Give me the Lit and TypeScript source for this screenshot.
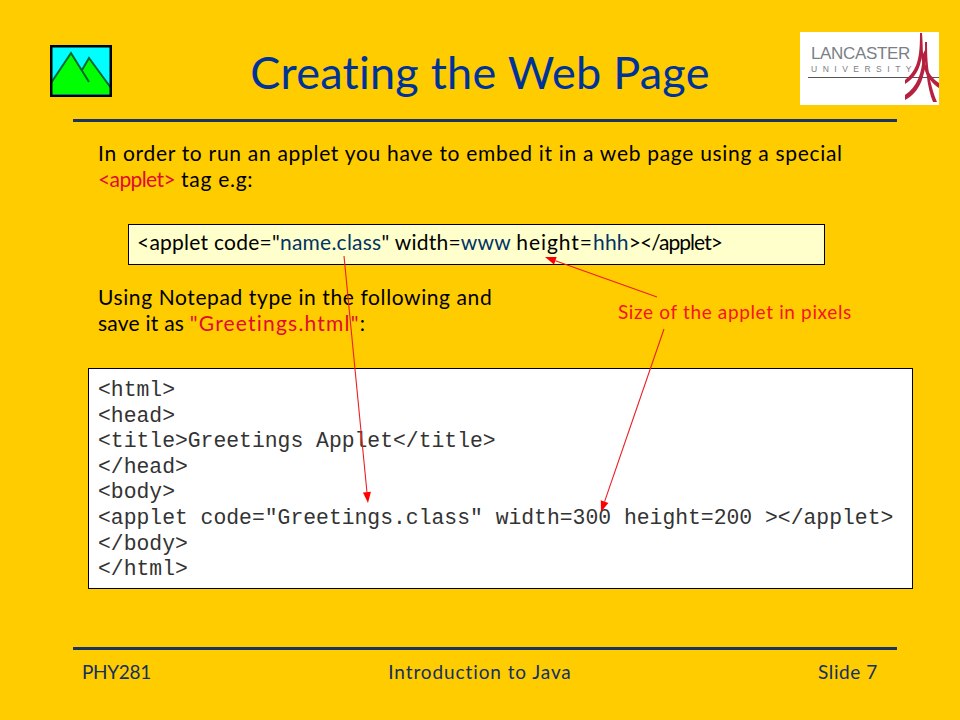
import { LitElement, html, css, svg } from "lit";
import { customElement } from "lit/decorators.js";

const arrow = (x1: number, y1: number, x2: number, y2: number) => {
  const a = Math.atan2(y2 - y1, x2 - x1);
  const len = 11, w = 4;
  const bx = x2 - len * Math.cos(a), by = y2 - len * Math.sin(a);
  const nx = -Math.sin(a) * w, ny = Math.cos(a) * w;
  return svg`<line x1=${x1} y1=${y1} x2=${bx} y2=${by} stroke="#ee1c25" stroke-width="1.1"></line>
    <polygon points="${x2},${y2} ${bx + nx},${by + ny} ${bx - nx},${by - ny}" fill="#f00"></polygon>`;
};

@customElement("app-root")
export class AppRoot extends LitElement {
  static styles = css`
    :host { display: block; width: 960px; height: 720px; }
    .slide {
      position: relative; box-sizing: border-box; width: 960px; height: 720px; overflow: hidden;
      background: #ffcc00; color: #000;
      font-family: "Lato", "Open Sans", sans-serif;
      display: flex; flex-direction: column;
    }
    .header { height: 119px; padding: 32px 21px 0 50px; box-sizing: border-box; display: flex; align-items: flex-start; }
    .mtn { width: 62px; height: 52px; margin-top: 13px; flex: none; display: block; }
    .title {
      flex: 1; text-align: center; color: #003399; font-size: 45px; line-height: 56px; margin-top: 12px;
      letter-spacing: 0.25px; padding-left: 48px; white-space: nowrap;
    }
    .logo { position: relative; width: 139px; height: 73px; background: #fff; flex: none; overflow: hidden; }
    .logo-text { padding: 13px 0 0 11px; color: #7a7f86; font-family: "Liberation Sans", sans-serif; }
    .lan { font-size: 17px; line-height: 18px; letter-spacing: -0.35px; white-space: nowrap; }
    .uni { font-size: 8.5px; line-height: 10px; letter-spacing: 5.5px; white-space: nowrap; margin-top: 1px; }
    .logo-rule { height: 1px; background: #555; margin: 3px 0 0 8px; }
    .spire { position: absolute; left: 0; top: 0; width: 139px; height: 73px; }
    .rule { height: 3px; background: #1a3360; margin: 0 63px 0 73px; flex: none; }
    .para { margin: 18px 0 0 98px; font-size: 21px; line-height: 26px; white-space: nowrap; letter-spacing: 0.7px; }
    .red { color: #e00b2f; }
    .tag { letter-spacing: -0.6px; }
    .blue { color: #003366; }
    .code {
      box-sizing: border-box; width: 697px; height: 41px; margin: 32px 0 0 128px;
      border: 1px solid #000; background: #ffffcc; padding: 0 0 0 8px;
      font-size: 21px; line-height: 33px; white-space: nowrap; letter-spacing: 0.24px;
    }
    .wide { letter-spacing: 0.95px; }
    .close { letter-spacing: -0.95px; }
    .middle { display: grid; grid-template-columns: 520px auto; margin: 19px 0 0 98px; }
    .txt { font-size: 21px; line-height: 26px; white-space: nowrap; letter-spacing: 0.6px; }
    .tight { letter-spacing: 0.24px; }
    .loose { letter-spacing: 1.2px; }
    .note { margin-top: 16px; font-size: 19px; line-height: 24px; color: #f5141e; white-space: nowrap; letter-spacing: 0.64px; }
    .box {
      box-sizing: border-box; width: 825px; height: 221px; margin: 32px 0 0 88px;
      border: 1px solid #000; background: #fff; padding: 9px 0 0 9px;
      font-family: "Liberation Mono", monospace; font-size: 21.38px; line-height: 25.6px; color: #333; white-space: pre;
    }
    .rule2 { margin-top: 58px; }
    .footer {
      margin: 10px 82px 0 82px; display: grid; grid-template-columns: 1fr auto 1fr;
      font-size: 19px; line-height: 24px; color: #14305f;
    }
    .f-l { letter-spacing: -0.3px; }
    .f-m { letter-spacing: 0.9px; }
    .f-r { text-align: right; letter-spacing: 0.6px; }
    .arrows { position: absolute; left: 0; top: 0; width: 960px; height: 720px; pointer-events: none; }
  `;

  render() {
    return html`<div class="slide">
      <div class="header">
        <svg class="mtn" viewBox="0 0 62 52">
          <rect x="1.5" y="1.5" width="59" height="49" fill="#00ffff"></rect>
          <path d="M2 38 L21 8 L32 25 L39 13 L60 43 L60 49 L2 49 Z" fill="#00ff00"></path>
          <path d="M1 38 L21 8 L39 37 M32 25 L39 13 L61 43" fill="none" stroke="#063" stroke-width="2"></path>
          <rect x="1.25" y="1.25" width="59.5" height="49.5" fill="none" stroke="#000" stroke-width="2.5"></rect>
        </svg>
        <div class="title">Creating the Web Page</div>
        <div class="logo">
          <div class="logo-text">
            <div class="lan">LANCASTER</div>
            <div class="uni">UNIVERSITY</div>
          </div>
          <div class="logo-rule"></div>
          <svg class="spire" viewBox="0 0 139 73">
            <g fill="#b5213f">
              <path d="M120 1 C120 25 118 38 105 48 L105 52 C120 43 124 28 122 1 Z"></path>
              <path d="M123 22 C122 42 117 55 105 63 L105 68 C120 60 126 45 127 14 Z"></path>
              <path d="M120 8 L122 1 C122 28 126 42 139 51 L139 56 C125 47 120 30 120 8 Z"></path>
              <path d="M125 10 L127 10 C127 38 130 52 137 70 L133 70 C127 55 125 35 125 10 Z"></path>
            </g>
          </svg>
        </div>
      </div>
      <div class="rule"></div>
      <div class="para">In order to run an applet you have to embed it in a web page using a special<br /><span class="red tag">&lt;applet&gt;</span> tag e.g:</div>
      <div class="code">&lt;applet code="<span class="blue">name.class</span>" width=<span class="blue">www</span> <span class="wide">height=</span><span class="blue">hhh</span><span class="close">&gt;&lt;/applet&gt;</span></div>
      <div class="middle">
        <div class="txt">Using Notepad type in the following and<br /><span class="tight">save it as </span><span class="red loose">"Greetings.html"</span>:</div>
        <div class="note">Size of the applet in pixels</div>
      </div>
      <div class="box">&lt;html&gt;
&lt;head&gt;
&lt;title&gt;Greetings Applet&lt;/title&gt;
&lt;/head&gt;
&lt;body&gt;
&lt;applet code="Greetings.class" width=300 height=200 &gt;&lt;/applet&gt;
&lt;/body&gt;
&lt;/html&gt;</div>
      <div class="rule rule2"></div>
      <div class="footer"><div class="f-l">PHY281</div><div class="f-m">Introduction to Java</div><div class="f-r">Slide 7</div></div>
      <svg class="arrows" viewBox="0 0 960 720">
        ${arrow(344, 256, 368, 503)}
        ${arrow(657, 297, 545, 257)}
        ${arrow(664, 329, 601, 512)}
      </svg>
    </div>`;
  }
}
